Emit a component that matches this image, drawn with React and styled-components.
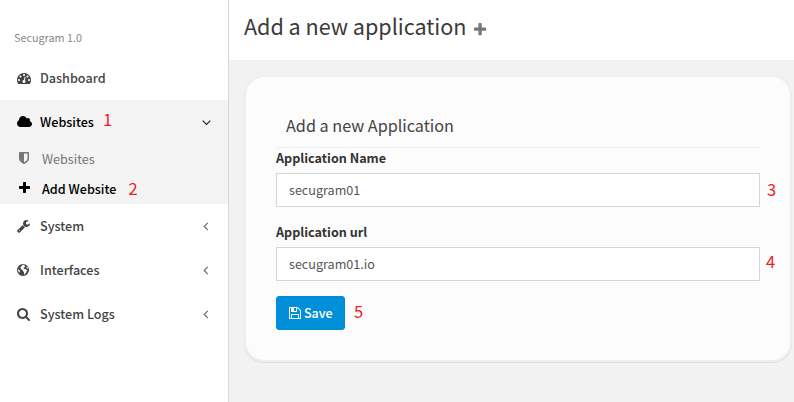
import React from "react";
import styled, { createGlobalStyle } from "styled-components";

const Global = createGlobalStyle`
  * { box-sizing: border-box; }
  body {
    margin: 0;
    overflow: hidden;
    font-family: "Noto Sans CJK SC", "Noto Sans", sans-serif;
    font-size: 12.6px;
    color: #3c3c3b;
  }
`;

const Page = styled.div`
  display: flex;
  width: 794px;
  height: 402px;
  background: #f2f2f2;
`;

const Sidebar = styled.nav`
  width: 229px;
  background: #fff;
  border-right: 1px solid #d3d6e0;
`;

const Version = styled.div`
  height: 56px;
  padding: 19px 0 0 14px;
  font-size: 10.8px;
  line-height: 36px;
  color: #888;
`;

const MenuItem = styled.div`
  display: flex;
  align-items: center;
  height: 44px;
  padding: 0 17px;
  font-weight: 500;
  line-height: 20px;
  color: ${(p) => (p.$active ? "#000" : "#444")};
  background: ${(p) => (p.$active ? "#f3f3f3" : "#fff")};
`;

const SubMenu = styled.div`
  background: #f3f3f3;
`;

const SubItem = styled.div`
  display: flex;
  align-items: center;
  height: 30px;
  padding: 0 0 2px 19px;
  color: ${(p) => (p.$active ? "#000" : "#777")};
  font-weight: ${(p) => (p.$active ? 500 : 400)};
`;

const IconSlot = styled.span`
  display: flex;
  flex: none;
  width: 23px;
`;

const Arrow = styled.svg`
  width: 9px;
  height: 9px;
  margin-left: auto;
  fill: none;
  stroke: ${(p) => (p.$open ? "#222" : "#5a6c80")};
  stroke-width: 1.15;
`;

const Note = styled.span`
  margin-left: ${(p) => p.$gap || 0}px;
  font-size: 16.5px;
  font-weight: 400;
  line-height: 20px;
  color: #ed1c24;
  transform: translateY(${(p) => p.$shift || 0}px);
`;

const Main = styled.main`
  flex: 1;
  min-width: 0;
`;

const Header = styled.header`
  display: flex;
  align-items: center;
  height: 60px;
  padding: 0 0 8px 15px;
  background: #fff;
`;

const Title = styled.h1`
  margin: 0 8px 0 0;
  font-size: 21.6px;
  font-weight: 400;
  letter-spacing: -0.03px;
  line-height: 30px;
  color: #3a3a3a;
`;

const TitleIcon = styled.span`
  display: flex;
  padding-top: 7px;
`;

const Card = styled.section`
  width: 548px;
  height: 287px;
  margin: 15px 0 0 15px;
  padding: 33px 30px 0;
  background: #fcfcfc;
  border: 2px solid #eee;
  border-radius: 20px;
  box-shadow: 0 1px 0 #ddd;
`;

const Legend = styled.h2`
  height: 38px;
  margin: 0;
  padding-left: 10px;
  border-bottom: 1px solid #f0f0f0;
  font-size: 16.2px;
  font-weight: 400;
  line-height: 31px;
  color: #444;
`;

const Field = styled.div`
  position: relative;
  height: 74px;
`;

const Label = styled.label`
  display: block;
  height: 25px;
  font-weight: 700;
  line-height: 20px;
  color: #333;
`;

const Input = styled.input`
  display: block;
  width: 484px;
  height: 34px;
  padding: 0 12px 1px;
  border: 1px solid #d3d6e0;
  border-radius: 0;
  outline: none;
  background: #fff;
  font: inherit;
  color: #555;
`;

const FieldNote = styled.span`
  position: absolute;
  left: ${(p) => p.$x}px;
  top: ${(p) => p.$y}px;
  font-size: 16.5px;
  line-height: 20px;
  color: #ed1c24;
`;

const Actions = styled.div`
  display: flex;
  align-items: center;
`;

const SaveButton = styled.button`
  display: flex;
  align-items: center;
  gap: 3px;
  width: 69px;
  height: 34px;
  padding: 0 0 1px 12px;
  border: 1px solid #0089d4;
  border-radius: 3px;
  background: #008fd8;
  color: #fff;
  font: inherit;
  font-weight: 500;
  letter-spacing: -0.1px;
`;

const icons = {
  dashboard: {
    w: 1792,
    d: "M384 1152q0-53-37.5-90.5t-90.5-37.5-90.5 37.5-37.5 90.5 37.5 90.5 90.5 37.5 90.5-37.5 37.5-90.5zm192-448q0-53-37.5-90.5t-90.5-37.5-90.5 37.5-37.5 90.5 37.5 90.5 90.5 37.5 90.5-37.5 37.5-90.5zm428 481l101-382q6-26-7.5-48.5t-38.5-29.5-48 6.5-30 39.5l-101 382q-60 5-107 43.5t-63 98.5q-20 77 20 146t117 89 146-20 89-117q16-60-6-117t-72-91zm660-33q0-53-37.5-90.5t-90.5-37.5-90.5 37.5-37.5 90.5 37.5 90.5 90.5 37.5 90.5-37.5 37.5-90.5zm-640-640q0-53-37.5-90.5t-90.5-37.5-90.5 37.5-37.5 90.5 37.5 90.5 90.5 37.5 90.5-37.5 37.5-90.5zm448 192q0-53-37.5-90.5t-90.5-37.5-90.5 37.5-37.5 90.5 37.5 90.5 90.5 37.5 90.5-37.5 37.5-90.5zm320 448q0 261-141 483-19 29-54 29h-1402q-35 0-54-29-141-221-141-483 0-182 71-348t191-286 286-191 348-71 348 71 286 191 191 286 71 348z",
  },
  cloud: {
    x: 64,
    w: 1920,
    d: "M1984 1152q0 159-112.5 271.5t-271.5 112.5h-1088q-185 0-316.5-131.5t-131.5-316.5q0-132 71-241.5t187-163.5q-2-28-2-43 0-212 150-362t362-150q158 0 286.5 88t187.5 230q70-62 166-62 106 0 181 75t75 181q0 75-41 138 129 30 213 134.5t84 239.5z",
  },
  shield: {
    x: 256,
    w: 1280,
    d: "M1344 960v-640h-448v1137q119-63 213-137 235-184 235-360zm192-768v768q0 86-33.5 170.5t-83 150-118 127.5-126.5 103-121 77.5-89.5 49.5-42.5 20q-12 6-26 6t-26-6q-16-7-42.5-20t-89.5-49.5-121-77.5-126.5-103-118-127.5-83-150-33.5-170.5v-768q0-26 19-45t45-19h1152q26 0 45 19t19 45z",
  },
  plus: {
    x: 192,
    w: 1408,
    d: "M1600 736v192q0 40-28 68t-68 28h-416v416q0 40-28 68t-68 28h-192q-40 0-68-28t-28-68v-416h-416q-40 0-68-28t-28-68v-192q0-40 28-68t68-28h416v-416q0-40 28-68t68-28h192q40 0 68 28t28 68v416h416q40 0 68 28t28 68z",
  },
  wrench: {
    x: 64,
    w: 1728,
    d: "M448 1472q0-26-19-45t-45-19-45 19-19 45 19 45 45 19 45-19 19-45zm644-420l-682 682q-37 37-90 37-52 0-91-37l-106-108q-38-36-38-90 0-53 38-91l681-681q39 98 114.5 173.5t173.5 114.5zm634-435q0 39-23 106-47 134-164.5 217.5t-258.5 83.5q-185 0-316.5-131.5t-131.5-316.5 131.5-316.5 316.5-131.5q58 0 121.5 16.5t107.5 46.5q16 11 16 28t-16 28l-293 169v224l193 107q5-3 79-48.5t135.5-81 70.5-35.5q15 0 23.5 10t8.5 25z",
  },
  globe: {
    x: 128,
    w: 1600,
    d: "M896 128a768 768 0 1 0 0 1536a768 768 0 1 0 0-1536zM820 250L1010 230L1120 310L1060 400L1180 430L1110 540L1010 600L940 700L1040 760L1220 760L1340 860L1440 940L1350 1090L1280 1260L1130 1420L1040 1490L1010 1330L1020 1160L900 1040L860 920L760 850L640 760L560 620L600 500L710 430L760 340zM1380 440L1480 540L1540 700L1450 730L1360 640L1320 540zM280 760L370 860L480 940L500 1080L450 1240L340 1130L270 960z",
  },
  search: {
    x: 64,
    w: 1728,
    d: "M1216 832q0-185-131.5-316.5t-316.5-131.5-316.5 131.5-131.5 316.5 131.5 316.5 316.5 131.5 316.5-131.5 131.5-316.5zm512 832q0 52-38 90t-90 38q-54 0-90-38l-343-342q-179 124-399 124-143 0-273.5-55.5t-225-150-150-225-55.5-273.5 55.5-273.5 150-225 225-150 273.5-55.5 273.5 55.5 225 150 150 225 55.5 273.5q0 220-124 399l343 343q37 37 37 90z",
  },
  save: {
    x: 128,
    w: 1536,
    d: "M512 1536h768v-384h-768v384zm896 0h128v-896q0-14-10-38.5t-20-34.5l-281-281q-10-10-34-20t-39-10v416q0 40-28 68t-68 28h-576q-40 0-68-28t-28-68v-416h-128v1280h128v-416q0-40 28-68t68-28h832q40 0 68 28t28 68v416zm-384-928v-320q0-13-9.5-22.5t-22.5-9.5h-192q-13 0-22.5 9.5t-9.5 22.5v320q0 13 9.5 22.5t22.5 9.5h192q13 0 22.5-9.5t9.5-22.5zm640 32v928q0 40-28 68t-68 28h-1344q-40 0-68-28t-28-68v-1344q0-40 28-68t68-28h928q40 0 88 20t76 48l280 280q28 28 48 76t20 88z",
  },
};

function Icon({ name, size = 14, color = "currentColor" }) {
  const { x = 0, w, d } = icons[name];
  return (
    <svg
      width={(size * w) / 1792}
      height={size}
      viewBox={`${x} 0 ${w} 1792`}
      fill={color}
      fillRule={name === "globe" ? "evenodd" : "nonzero"}
    >
      <path d={d} />
    </svg>
  );
}

function Chevron({ open }) {
  return (
    <Arrow viewBox="0 0 9 9" $open={open}>
      <path d={open ? "M0.7 2.7 4.5 6.4 8.3 2.7" : "M5.8 0.9 2.2 4.5 5.8 8.1"} />
    </Arrow>
  );
}

export default function App() {
  return (
    <Page>
      <Global />
      <Sidebar>
        <Version>Secugram 1.0</Version>
        <MenuItem>
          <IconSlot><Icon name="dashboard" /></IconSlot>Dashboard
        </MenuItem>
        <MenuItem $active>
          <IconSlot><Icon name="cloud" /></IconSlot>Websites
          <Note $gap={9} $shift={-3}>1</Note>
          <Chevron open />
        </MenuItem>
        <SubMenu>
          <SubItem><IconSlot><Icon name="shield" /></IconSlot>Websites</SubItem>
          <SubItem $active>
            <IconSlot><Icon name="plus" /></IconSlot>Add Website
            <Note $gap={12} $shift={0}>2</Note>
          </SubItem>
        </SubMenu>
        <MenuItem>
          <IconSlot><Icon name="wrench" /></IconSlot>System<Chevron />
        </MenuItem>
        <MenuItem>
          <IconSlot><Icon name="globe" /></IconSlot>Interfaces<Chevron />
        </MenuItem>
        <MenuItem>
          <IconSlot><Icon name="search" /></IconSlot>System Logs<Chevron />
        </MenuItem>
      </Sidebar>
      <Main>
        <Header>
          <Title>Add a new application</Title>
          <TitleIcon><Icon name="plus" size={15.5} color="#777" /></TitleIcon>
        </Header>
        <Card>
          <Legend>Add a new Application</Legend>
          <Field>
            <Label htmlFor="name">Application Name</Label>
            <Input id="name" defaultValue="secugram01" />
            <FieldNote $x={491} $y={31}>3</FieldNote>
          </Field>
          <Field>
            <Label htmlFor="url">Application url</Label>
            <Input id="url" defaultValue="secugram01.io" />
            <FieldNote $x={490} $y={29}>4</FieldNote>
          </Field>
          <Actions>
            <SaveButton type="button"><Icon name="save" />Save</SaveButton>
            <Note $gap={9} $shift={-2}>5</Note>
          </Actions>
        </Card>
      </Main>
    </Page>
  );
}
